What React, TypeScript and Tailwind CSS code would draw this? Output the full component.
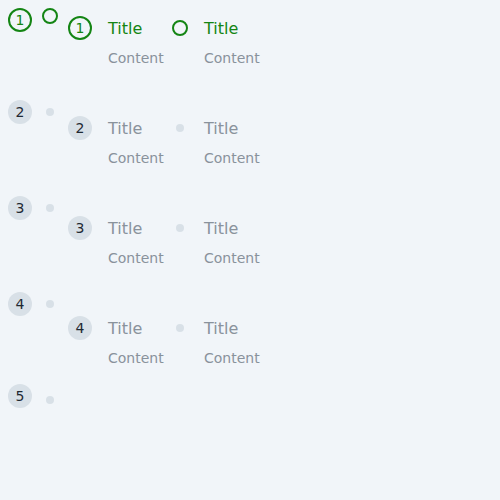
const green = 'text-[#148514]'

const NumDot = ({ n, active }: { n: number; active?: boolean }) =>
  active ? (
    <div className="flex h-6 w-6 items-center justify-center rounded-full border-2 border-[#148514] text-sm text-[#148514]">
      {n}
    </div>
  ) : (
    <div className="flex h-6 w-6 items-center justify-center rounded-full bg-[#d8e0e7] text-sm text-[#1f2933]">
      {n}
    </div>
  )

const SmallDot = ({ active }: { active?: boolean }) => (
  <div className="flex h-4 w-4 items-center justify-center">
    {active ? (
      <div className="h-4 w-4 rounded-full border-2 border-[#148514]" />
    ) : (
      <div className="h-2 w-2 rounded-full bg-[#d8e0e7]" />
    )}
  </div>
)

const StepText = ({ active }: { active?: boolean }) => (
  <div className="flex flex-col pt-px">
    <span className={`text-base leading-6 ${active ? green : 'text-[#89929c]'}`}>Title</span>
    <span className="mt-[7px] text-sm leading-5 text-[#89929c]">Content</span>
  </div>
)

export default function App() {
  const steps = [1, 2, 3, 4]
  return (
    <div
      className="flex h-[500px] w-[500px] gap-[10px] bg-[#f1f5f9] px-2 pt-2"
      style={{ fontFamily: '"DejaVu Sans", sans-serif' }}
    >
      {/* numbered dots only */}
      <div className="flex flex-col">
        <div className="h-[92px]">
          <NumDot n={1} active />
        </div>
        <div className="h-24">
          <NumDot n={2} />
        </div>
        <div className="h-24">
          <NumDot n={3} />
        </div>
        <div className="h-[92px]">
          <NumDot n={4} />
        </div>
        <NumDot n={5} />
      </div>

      {/* small dots only */}
      <div className="flex flex-col">
        {[1, 2, 3, 4, 5].map((n) => (
          <div key={n} className="h-24">
            <SmallDot active={n === 1} />
          </div>
        ))}
      </div>

      {/* numbered with text */}
      <div className="flex w-24 flex-col pt-2">
        {steps.map((n) => (
          <div key={n} className="flex h-[100px] gap-4">
            <NumDot n={n} active={n === 1} />
            <StepText active={n === 1} />
          </div>
        ))}
      </div>

      {/* dot with text */}
      <div className="-ml-[2px] flex flex-col pt-2">
        {steps.map((n) => (
          <div key={n} className="flex h-[100px] gap-4">
            <div className="flex h-6 w-4 items-center justify-center">
              <SmallDot active={n === 1} />
            </div>
            <StepText active={n === 1} />
          </div>
        ))}
      </div>
    </div>
  )
}
